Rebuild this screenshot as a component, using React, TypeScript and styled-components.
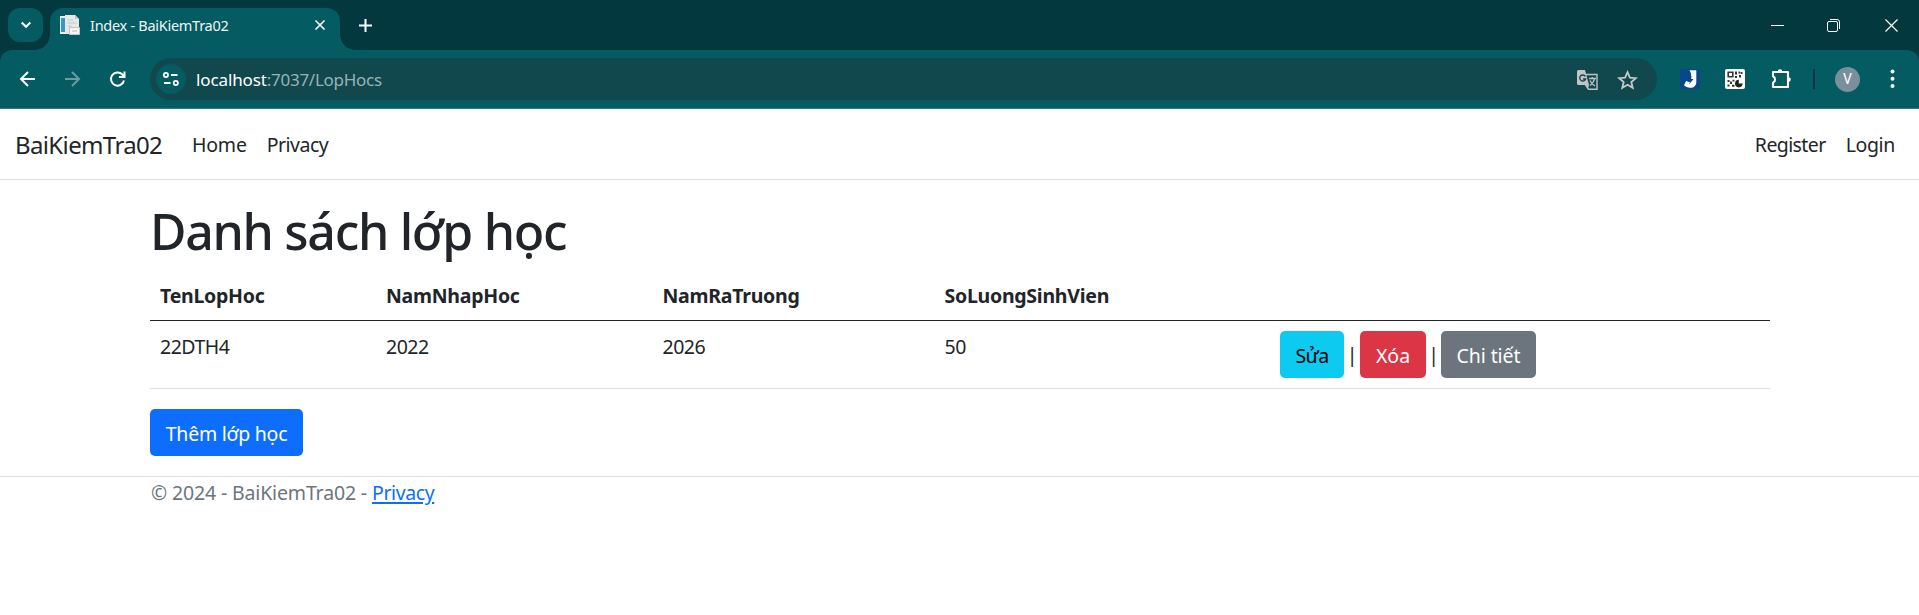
import React from "react";
import styled, { createGlobalStyle } from "styled-components";

const GlobalStyle = createGlobalStyle`
  * { box-sizing: border-box; }
  body {
    margin: 0;
    background: #fff;
    color: #212529;
    font-family: "Noto Sans", "Open Sans", sans-serif;
    font-size: 19.5px;
    font-weight: 370;
    line-height: 30px;
    overflow: hidden;
  }
`;

const Page = styled.div`
  display: flex;
  flex-direction: column;
  height: 615px;
`;

const Spaced = styled.span<{ $tracking?: number }>`
  letter-spacing: ${(p) => p.$tracking ?? 0}px;
  white-space: nowrap;
`;

/* Browser window */
const TabStrip = styled.div`
  display: flex;
  align-items: flex-end;
  height: 50px;
  flex: none;
  padding-left: 8px;
  background: #02383e;
`;

const TabSearch = styled.div`
  display: grid;
  place-items: center;
  width: 35px;
  height: 34px;
  margin: 0 7px 8px 0;
  border-radius: 12px;
  background: #045b61;
`;

const Tab = styled.div`
  position: relative;
  display: flex;
  align-items: center;
  width: 290px;
  height: 42px;
  padding: 0 12px 8px 10px;
  border-radius: 13px 13px 0 0;
  background: #045b61;
  color: #eef6f6;
  font-size: 14.5px;
  line-height: 20px;

  &::before,
  &::after {
    content: "";
    position: absolute;
    bottom: 0;
    width: 15px;
    height: 15px;
  }
  &::before {
    left: -15px;
    background: radial-gradient(circle at 0 0, transparent 14.5px, #045b61 15px);
  }
  &::after {
    right: -15px;
    background: radial-gradient(circle at 100% 0, transparent 14.5px, #045b61 15px);
  }
`;

const TabTitle = styled.span`
  flex: 1;
  padding-left: 10px;
  letter-spacing: -0.28px;
  white-space: nowrap;
`;

const NewTab = styled.div`
  display: grid;
  place-items: center;
  width: 14px;
  height: 14px;
  margin: 0 auto 18px 18px;
`;

const WindowControls = styled.div`
  display: flex;
  align-items: center;
  gap: 43px;
  height: 50px;
  padding-right: 20px;
`;

const ToolbarBackdrop = styled.div`
  flex: none;
  height: 59px;
  background: #02383e;
`;

const Toolbar = styled.div`
  display: flex;
  align-items: center;
  height: 59px;
  padding: 0 14px 0 17px;
  border-bottom: 1px solid #33787d;
  border-radius: 12px 12px 0 0;
  background: #045b61;
`;

const NavButtons = styled.div`
  display: flex;
  flex: none;
  gap: 24px;
  width: 133px;
`;

const AddressBar = styled.div`
  display: flex;
  flex: none;
  align-items: center;
  width: 1507px;
  height: 42px;
  padding: 1px 19px 0 6px;
  border-radius: 21px;
  background: #10484e;
  font-size: 17px;
`;

const SiteInfo = styled.div`
  display: grid;
  place-items: center;
  width: 30px;
  height: 30px;
  margin: -1px 10px 0 0;
  border-radius: 50%;
  background: #045b61;
`;

const Host = styled.span`
  color: #fff;
  letter-spacing: -0.12px;
`;

const UrlPath = styled.span`
  flex: 1;
  color: #96b4b7;
  letter-spacing: -0.27px;
`;

const BarIcons = styled.div`
  display: flex;
  align-items: center;
  gap: 19px;
`;

const Extensions = styled.div`
  display: flex;
  align-items: center;
  gap: 25px;
  margin-left: 23px;
`;

const Divider = styled.div`
  width: 2px;
  height: 20px;
  margin-left: -5px;
  background: #02383e;
`;

const Avatar = styled.div`
  display: grid;
  place-items: center;
  width: 25px;
  height: 25px;
  margin-left: -5px;
  border-radius: 50%;
  background: #78909c;
  color: #fff;
  font: 14px/25px Roboto, sans-serif;
`;

/* Site */
const Navbar = styled.header`
  display: flex;
  align-items: center;
  flex: none;
  height: 71px;
  padding: 0 24px 0 15px;
  border-bottom: 1px solid #dee2e6;
  white-space: nowrap;
`;

const Brand = styled.a`
  width: 177px;
  padding-top: 1px;
  font-size: 24px;
  letter-spacing: -0.63px;
`;

const NavList = styled.nav<{ $end?: boolean }>`
  display: flex;
  gap: 20px;
  padding-top: 2px;
  margin-left: ${(p) => (p.$end ? "auto" : "0")};
`;

const Container = styled.main`
  width: 1620px;
  margin: 21px 0 0 150px;
`;

const Heading = styled.h1`
  margin: 0 0 9px;
  font-size: 50px;
  font-weight: 540;
  line-height: 60px;
  letter-spacing: -1.3px;
`;

const Table = styled.div`
  margin-bottom: 20px;
`;

const Row = styled.div<{ $head?: boolean }>`
  display: grid;
  grid-template-columns: 226px 276.5px 282px 345.5px 1fr;
  height: ${(p) => (p.$head ? 51 : 68)}px;
  border-bottom: 1px solid ${(p) => (p.$head ? "#212529" : "#dee2e6")};
  font-weight: ${(p) => (p.$head ? 700 : "inherit")};
`;

const Cell = styled.div`
  padding: 11px 10px 0;
`;

const Actions = styled.div`
  display: flex;
  padding-top: 10px;
`;

const tones = {
  info: ["#0dcaf0", "#000"],
  danger: ["#dc3545", "#fff"],
  secondary: ["#6c757d", "#fff"],
  primary: ["#0d6efd", "#fff"],
};

const Button = styled.button<{ $tone: keyof typeof tones; $width: number }>`
  width: ${(p) => p.$width}px;
  height: 47px;
  padding: 3px 0 0;
  border: 0;
  border-radius: 5px;
  background: ${(p) => tones[p.$tone][0]};
  color: ${(p) => tones[p.$tone][1]};
  font: inherit;
`;

const Pipe = styled.span<{ $width: number }>`
  width: ${(p) => p.$width}px;
  padding-top: 9px;
  text-align: center;
`;

const Footer = styled.footer`
  margin-top: 20px;
  padding-left: 151px;
  border-top: 1px solid #dee2e6;
  color: #6c757d;
  line-height: 31px;
  white-space: nowrap;
`;

const FooterLink = styled.a`
  margin-left: 5px;
  color: #0d6efd;
  letter-spacing: -0.4px;
  text-decoration: underline;
  text-decoration-thickness: 1.5px;
  text-underline-offset: 2px;
`;

const Icon = styled.svg`
  display: block;
  flex: none;
  overflow: visible;
`;

const PageIcon = () => (
  <Icon width="20" height="20" viewBox="0 0 20 20">
    <path d="M0 1h11v18H0z" fill="#e9eef2" />
    <path d="M1 3h4v14H1z" fill="#3c94cf" />
    <path d="M5 0h10l4 4v15H5z" fill="#e8e8e8" />
    <path d="M15 0l4 4h-4z" fill="#bfc6ca" />
    <path d="M7.5 5h6M7.5 8h9M7.5 11h4" stroke="#c2c9cd" />
    <path d="M9.5 12.500h10v7h-10z" fill="#f5f5f5" stroke="#c5c5c5" />
    <path d="M12 16h5" stroke="#b5b9bc" />
  </Icon>
);

const TranslateIcon = () => (
  <Icon width="21" height="20" viewBox="0 0 21 20">
    <path d="M9 4.500h11v14.800H11.500L8 14" fill="none" stroke="#bcc5c6" strokeWidth="1.4" />
    <path d="M1.500 0H8l4 15H1.500A1.500 1.500 0 0 1 0 13.500v-12A1.500 1.500 0 0 1 1.500 0z" fill="#c4c4c4" />
    <path d="M8.300 6.300A3 3 0 1 0 8.600 9H6" fill="none" stroke="#10484e" strokeWidth="1.400" />
    <path d="M12 8.500h7M15.300 7v1.500M17.500 8.500c-.5 3-2 5-4.500 7M13 10.500c1 2.500 2.500 4 5 5.500" fill="none" stroke="#bcc5c6" strokeWidth="1.300" />
    <path d="M9 15h3l-1 4z" fill="#c4c4c4" />
  </Icon>
);

const JExtensionIcon = () => (
  <Icon width="20" height="20" viewBox="0 0 20 20">
    <rect width="20" height="20" rx="2" fill="#07478a" />
    <path d="M9.500 1.200h6.800V13c0 3.500-2.200 5.800-6 5.800-2.700 0-4.800-1-6.300-2.500l2.200-4.500c1.400 1.400 4.800 2 4.800-.5V4.500z" fill="#fff" />
    <path d="M11.500 6.500L8 11.200h2.500L9 15.500l4.500-5.500h-2.300z" fill="#07478a" />
  </Icon>
);

const QrIcon = () => (
  <Icon width="20" height="20" viewBox="0 0 20 20">
    <rect width="20" height="20" rx="2" fill="#fff" />
    <path d="M3.200 3.200h4.600v4.600H3.200z" fill="none" stroke="#333" strokeWidth="1.600" />
    <path d="M10 2.500h2v3h-2zM10 7h2v2h-2zM13.500 2.500h1.500v2h-1.500zM15.500 3h2v2h-2zM14 6h2v2.500h-2zM2.500 11h2v2h-2zM5 12.500h2V15H5zM7.500 10.800h2v1.700h-2zM2.500 15.500h2v2h-2zM7 15.700h2.500v2H7z" fill="#333" />
    <path d="M13.800 10.800v3.800h3.800a3.800 3.800 0 1 1-3.800-3.800z" fill="#222" />
  </Icon>
);

const columns = ["TenLopHoc", "NamNhapHoc", "NamRaTruong", "SoLuongSinhVien"];
const values = ["22DTH4", "2022", "2026", "50"];

export default function App() {
  return (
    <Page>
      <GlobalStyle />
      <TabStrip>
        <TabSearch>
          <Icon width="10" height="6" viewBox="0 0 10 6" fill="none" stroke="#fff" strokeWidth="2.100">
            <path d="M.7.500L5 4.800 9.300.500" />
          </Icon>
        </TabSearch>
        <Tab>
          <PageIcon />
          <TabTitle>Index - BaiKiemTra02</TabTitle>
          <Icon width="16" height="10" viewBox="0 0 16 10" stroke="#fff" strokeWidth="1.700">
            <path d="M3.500.5l9 9M12.500.5l-9 9" />
          </Icon>
        </Tab>
        <NewTab>
          <Icon width="13" height="13" viewBox="0 0 13 13" stroke="#fff" strokeWidth="2">
            <path d="M0 6.500h13M6.500 0v13" />
          </Icon>
        </NewTab>
        <WindowControls>
          <Icon width="13" height="13" viewBox="1 0 13 13" stroke="#fff">
            <path d="M0 6.500h13" />
          </Icon>
          <Icon width="13" height="13" viewBox="1 0 13 13" fill="none" stroke="#fff">
            <rect x=".5" y="2.500" width="10" height="10" rx="1.500" />
            <path d="M3 .5h7a2.500 2.500 0 0 1 2.500 2.500v7" />
          </Icon>
          <Icon width="15" height="13" viewBox="0 0 15 13" stroke="#fff" strokeWidth="1.200">
            <path d="M1.500.5l12 12M13.500.5l-12 12" />
          </Icon>
        </WindowControls>
      </TabStrip>

      <ToolbarBackdrop>
        <Toolbar>
          <NavButtons>
            <Icon width="21" height="20" viewBox="0 0 21 20" fill="none" stroke="#fff" strokeWidth="2">
              <path d="M18 10H4.500M11 3l-7 7 7 7" />
            </Icon>
            <Icon width="21" height="20" viewBox="0 0 21 20" fill="none" stroke="#6b9da0" strokeWidth="2">
              <path d="M3 10h13.500M10 3l7 7-7 7" />
            </Icon>
            <Icon width="21" height="20" viewBox="0 0 21 20" fill="none" stroke="#fff" strokeWidth="2">
              <path d="M17 11.500A6.600 6.600 0 1 1 15.200 5.300L17 7.200M17.500 2.500v5.500H12" />
            </Icon>
          </NavButtons>
          <AddressBar>
            <SiteInfo>
              <Icon width="16" height="14" viewBox="0 0 16 14" fill="none" stroke="#fff" strokeWidth="1.800">
                <circle cx="2.900" cy="3" r="2.100" />
                <path d="M8 3h6.500M1 11h6.500" />
                <circle cx="12.800" cy="11" r="2.100" />
              </Icon>
            </SiteInfo>
            <Host>localhost</Host>
            <UrlPath>:7037/LopHocs</UrlPath>
            <BarIcons>
              <TranslateIcon />
              <Icon width="21" height="20" viewBox="0 0 21 20" fill="none" stroke="#c4c9c9" strokeWidth="1.800">
                <path d="M10.500 2.200l2.400 5.400 5.900.5-4.500 3.900 1.400 5.800-5.200-3.100-5.200 3.100 1.400-5.800L2.200 8.100l5.900-.5z" />
              </Icon>
            </BarIcons>
          </AddressBar>
          <Extensions>
            <JExtensionIcon />
            <QrIcon />
            <Icon width="23" height="22" viewBox="0 0 23 22" fill="none" stroke="#fff" strokeWidth="2.100">
              <path d="M3 4h15v15H3v-4.300a3.500 3.500 0 0 0 0-6.400z" strokeLinejoin="round" />
              <path d="M7.700 3.500a2.300 2.300 0 0 1 4.600 0zM18.500 9.200a2.300 2.300 0 0 1 0 4.600z" fill="#fff" stroke="none" />
            </Icon>
            <Divider />
            <Avatar>V</Avatar>
            <Icon width="20" height="20" viewBox="0 0 20 20" fill="#fff">
              <circle cx="7.500" cy="2.500" r="2" />
              <circle cx="7.500" cy="9.800" r="2" />
              <circle cx="7.500" cy="17" r="2" />
            </Icon>
          </Extensions>
        </Toolbar>
      </ToolbarBackdrop>

      <Navbar>
        <Brand>BaiKiemTra02</Brand>
        <NavList>
          <Spaced $tracking={-0.2}>Home</Spaced>
          <Spaced $tracking={-0.5}>Privacy</Spaced>
        </NavList>
        <NavList $end>
          <Spaced $tracking={-0.6}>Register</Spaced>
          <Spaced $tracking={-0.35}>Login</Spaced>
        </NavList>
      </Navbar>

      <Container>
        <Heading>Danh sách lớp học</Heading>
        <Table>
          <Row $head>
            {columns.map((name) => (
              <Cell key={name}>
                <Spaced $tracking={-0.26}>{name}</Spaced>
              </Cell>
            ))}
          </Row>
          <Row>
            {values.map((value) => (
              <Cell key={value}>
                <Spaced $tracking={-0.5}>{value}</Spaced>
              </Cell>
            ))}
            <Actions>
              <Button $tone="info" $width={64}>
                <Spaced $tracking={-0.6}>Sửa</Spaced>
              </Button>
              <Pipe $width={16}>|</Pipe>
              <Button $tone="danger" $width={66}>Xóa</Button>
              <Pipe $width={15}>|</Pipe>
              <Button $tone="secondary" $width={95}>
                <Spaced $tracking={-0.1}>Chi tiết</Spaced>
              </Button>
            </Actions>
          </Row>
        </Table>
        <Button $tone="primary" $width={153}>
          <Spaced $tracking={-0.25}>Thêm lớp học</Spaced>
        </Button>
      </Container>

      <Footer>
        <Spaced $tracking={-0.15}>© 2024 - BaiKiemTra02 -</Spaced>
        <FooterLink>Privacy</FooterLink>
      </Footer>
    </Page>
  );
}
